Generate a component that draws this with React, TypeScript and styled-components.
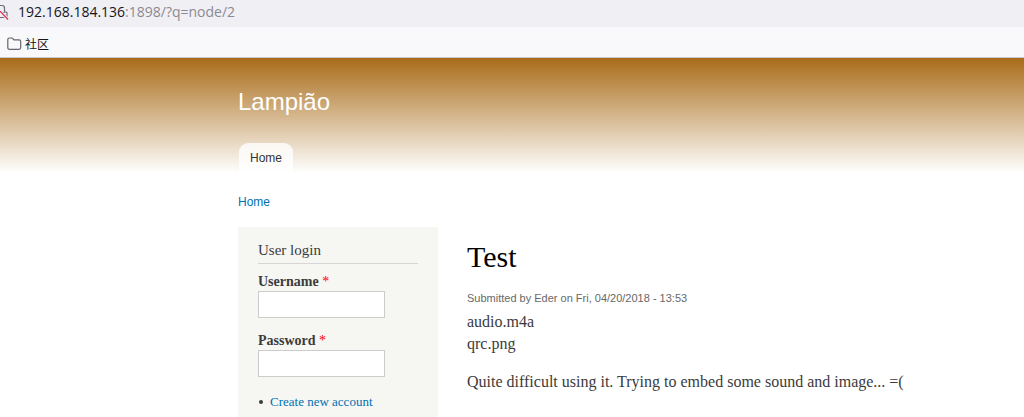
import React from "react";
import styled, { createGlobalStyle } from "styled-components";

const sans = `"Liberation Sans", Arial, sans-serif`;
const serif = `Georgia, "Liberation Serif", serif`;

const GlobalStyle = createGlobalStyle`
  *, *::before, *::after { box-sizing: border-box; }
  body {
    margin: 0;
    background: #fff;
    color: #3b3b3b;
    font-family: ${serif};
    font-size: 16px;
    overflow-x: hidden;
  }
`;

const Chrome = styled.div`
  border-bottom: 1px solid #c8c6d0;
  background: #f9f9fb;
  color: #15141a;
`;

const AddressBar = styled.div`
  display: flex;
  align-items: center;
  gap: 9px;
  height: 27px;
  padding-bottom: 3px;
  background: #f0eff4;
  font: 14px/20px "Open Sans", "Noto Sans", sans-serif;
`;

const AddressRest = styled.span`
  color: #8b8a92;
`;

const Bookmarks = styled.nav`
  display: flex;
  align-items: center;
  height: 30px;
  padding: 4px 7px 0;
`;

const Bookmark = styled.a`
  display: flex;
  align-items: center;
  gap: 3px;
  color: #15141a;
  font: 12px/16px "Noto Sans CJK SC", sans-serif;
  text-decoration: none;
`;

const Header = styled.header`
  display: flex;
  flex-direction: column;
  align-items: flex-start;
  padding: 28px 20px 0 238px;
  background: linear-gradient(#a96c19, #fff);
  font-family: ${sans};
`;

const SiteName = styled.a`
  color: #fff;
  font-size: 24px;
  line-height: 32px;
  text-decoration: none;
`;

const Tab = styled.a`
  margin: 25px 0 0 1px;
  padding: 0 11px;
  border-radius: 9px 9px 0 0;
  background: rgba(255, 255, 255, 0.8);
  color: #333;
  font-size: 12px;
  line-height: 30px;
  text-decoration: none;
`;

const Page = styled.div`
  padding: 21px 20px 0 238px;
`;

const Link = styled.a`
  color: #0071b3;
  text-decoration: none;
`;

const Breadcrumb = styled.nav`
  margin-bottom: 17px;
  font: 12px/16px ${sans};
`;

const Columns = styled.div`
  display: grid;
  grid-template-columns: 200px minmax(0, 1fr);
  column-gap: 29px;
`;

const Sidebar = styled.aside`
  padding: 13px 20px 6px;
  background: #f6f6f2;
`;

const BlockTitle = styled.h2`
  margin: 0 0 9px;
  padding-bottom: 3px;
  border-bottom: 1px solid #d6d6d6;
  font-size: 15px;
  font-weight: normal;
  line-height: 20px;
`;

const Field = styled.div`
  display: flex;
  flex-direction: column;
  align-items: flex-start;
  margin-bottom: 14px;
`;

const Label = styled.label`
  font-size: 14px;
  font-weight: bold;
  line-height: 18px;
`;

const Required = styled.span`
  color: #f00;
  font-weight: normal;
`;

const TextBox = styled.input`
  width: 127px;
  height: 27px;
  padding: 2px 4px;
  border: 1px solid #ccc;
  background: #fff;
  font: 13px ${serif};
`;

const AccountLinks = styled.ul`
  margin: 0;
  padding: 2px 0 0 1px;
  font-size: 13px;
  line-height: 18px;
  list-style: none;
`;

const AccountItem = styled.li`
  display: flex;
  align-items: center;
  gap: 7px;

  &::before {
    content: "";
    width: 4px;
    height: 4px;
    border-radius: 50%;
    background: #3b3b3b;
  }
`;

const Article = styled.article`
  padding-top: 14px;
`;

const Title = styled.h1`
  margin: 0 0 17px;
  color: #000;
  font-size: 30px;
  font-weight: normal;
  line-height: 32px;
`;

const Submitted = styled.p`
  margin: 0 0 5px;
  color: #686868;
  font: 11px/16px ${sans};
`;

const Paragraph = styled.p`
  margin: 0 0 16px;
  font-size: 16px;
  line-height: 22px;
`;

function BlockedLock() {
  return (
    <svg width="9" height="18" viewBox="0 0 9 18" fill="none" aria-hidden="true">
      <path d="M0 2.500h2Q4.500 2.500 4.500 5v4H6q1 0 1 1v4.500H0M0 9.500h4.500" stroke="#6c6b75" strokeWidth="1.2" />
      <path d="M-1 7L8 16.500" stroke="#f0eff4" strokeWidth="3" />
      <path d="M-1 7L8 16.500" stroke="#e22850" strokeWidth="1.2" />
    </svg>
  );
}

function Folder() {
  return (
    <svg width="15" height="14" viewBox="0 0 15 14" fill="none" aria-hidden="true">
      <path
        d="M2.500 1h2.700l1.800 1.800h5q1.700 0 1.700 1.700v6q0 1.800-1.800 1.800H2.500Q.8 12.300.8 10.500V2.700Q.8 1 2.500 1Z"
        stroke="#66656f"
        strokeWidth="1.2"
      />
    </svg>
  );
}

function LoginField({ id, label, type }: { id: string; label: string; type: string }) {
  return (
    <Field>
      <Label htmlFor={id}>
        {label} <Required>*</Required>
      </Label>
      <TextBox id={id} type={type} required />
    </Field>
  );
}

export default function App() {
  return (
    <>
      <GlobalStyle />
      <Chrome>
        <AddressBar>
          <BlockedLock />
          <span>
            192.168.184.136<AddressRest>:1898/?q=node/2</AddressRest>
          </span>
        </AddressBar>
        <Bookmarks>
          <Bookmark href="#">
            <Folder />
            社区
          </Bookmark>
        </Bookmarks>
      </Chrome>
      <Header>
        <SiteName href="#">Lampião</SiteName>
        <Tab href="#">Home</Tab>
      </Header>
      <Page>
        <Breadcrumb>
          <Link href="#">Home</Link>
        </Breadcrumb>
        <Columns>
          <Sidebar>
            <BlockTitle>User login</BlockTitle>
            <form>
              <LoginField id="username" label="Username" type="text" />
              <LoginField id="password" label="Password" type="password" />
              <AccountLinks>
                <AccountItem>
                  <Link href="#">Create new account</Link>
                </AccountItem>
              </AccountLinks>
            </form>
          </Sidebar>
          <Article>
            <Title>Test</Title>
            <Submitted>Submitted by Eder on Fri, 04/20/2018 - 13:53</Submitted>
            <Paragraph>
              audio.m4a
              <br />
              qrc.png
            </Paragraph>
            <Paragraph>Quite difficult using it. Trying to embed some sound and image... =(</Paragraph>
          </Article>
        </Columns>
      </Page>
    </>
  );
}
